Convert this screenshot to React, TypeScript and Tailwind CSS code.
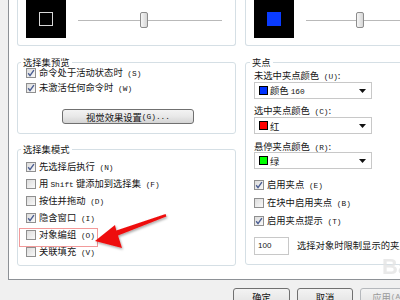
import React from "react";

function M({ children }: { children: React.ReactNode }) {
  return <span className="[font-family:'Liberation_Mono',monospace] text-[7.8px]">{children}</span>;
}

function Check({ checked }: { checked?: boolean }) {
  return (
    <span className="flex h-[10px] w-[10px] shrink-0 items-center justify-center border border-[#8f8f8f] bg-linear-to-br from-[#dcdcdc] to-[#f9f9f9]">
      {checked && (
        <svg width="8" height="8" viewBox="0 0 8 8">
          <path d="M1.2 4.3 L3 6.6 L6.9 1.1" fill="none" stroke="#4a5d92" strokeWidth="1.4" />
        </svg>
      )}
    </span>
  );
}

function Row({ checked, children }: { checked?: boolean; children: React.ReactNode }) {
  return (
    <div className="flex h-[12px] items-center gap-[3px] whitespace-nowrap leading-[12px]">
      <Check checked={checked} />
      <span>{children}</span>
    </div>
  );
}

function Slider({ pre }: { pre: number }) {
  return (
    <div className="ml-[12px] mt-[12px] flex h-[16px] flex-1 items-center">
      <div className={pre === 62 ? "h-[1px] w-[62px] bg-[#b9b9b9]" : "h-[1px] w-[50px] bg-[#b9b9b9]"} />
      <div className="h-[16px] w-[8px] shrink-0 rounded-[2px] border border-[#8c8c8c] bg-linear-to-r from-[#f6f6f6] to-[#d6d6d6]" />
      <div className="h-[1px] flex-1 bg-[#b9b9b9]" />
    </div>
  );
}

function Combo({ swatch, children }: { swatch: string; children: React.ReactNode }) {
  return (
    <div className="flex h-[17px] w-[118px] items-center gap-[2px] border border-[#c8c8c8] bg-white pl-[4px] pr-[5px]">
      <span className={"h-[9px] w-[9px] shrink-0 border border-black " + swatch} />
      <span className="leading-[12px]">{children}</span>
      <svg className="ml-auto" width="7" height="4" viewBox="0 0 7 4">
        <path d="M0 0 H7 L3.5 4 Z" fill="#111" />
      </svg>
    </div>
  );
}

function WinButton({ disabled, className, children }: { disabled?: boolean; className: string; children: React.ReactNode }) {
  return (
    <div
      className={
        "flex justify-center rounded-[3px] border bg-linear-to-b from-[#f3f3f3] via-[#e8e8e8] to-[#d4d4d4] leading-[12px] " +
        (disabled ? "border-[#b5b8bc] text-[#9a9a9a] " : "border-[#707070] text-[#111] ") +
        className
      }
    >
      {children}
    </div>
  );
}

export default function App() {
  return (
    <div className="relative h-[300px] w-[400px] overflow-hidden bg-[#f0f0f0] text-[9.3px] text-[#151515] [font-family:'Noto_Sans_CJK_SC',sans-serif]">
      {/* Tab page */}
      <div className="ml-[8px] h-[280px] overflow-hidden border-b border-l border-[#8d9196] bg-white pl-[8px]">
        <div className="flex gap-[9px]">
          {/* Left column */}
          <div className="w-[219px] shrink-0">
            <div className="flex h-[46px] items-start rounded-b-[3px] border-x border-b border-[#d5dfe5] pl-[8px] pr-[13px]">
              <div className="flex h-[38px] w-[40px] shrink-0 items-center justify-center bg-black">
                <div className="h-[14px] w-[14px] border border-[#d8d8d8]" />
              </div>
              <Slider pre={62} />
            </div>

            <fieldset className="mt-[11px] rounded-[3px] border border-[#d5dfe5] px-[8px] pb-[9px]">
              <legend className="-ml-[5px] px-[2px] leading-[10px]">选择集预览</legend>
              <div className="flex flex-col gap-[3px]">
                <Row checked>
                  命令处于活动状态时<M> (S)</M>
                </Row>
                <Row checked>
                  未激活任何命令时<M> (W)</M>
                </Row>
              </div>
              <WinButton className="ml-[36px] mt-[15px] h-[15px] w-[132px] items-center">
                视觉效果设置<M> (G)...</M>
              </WinButton>
            </fieldset>

            <fieldset className="mt-[10px] rounded-[3px] border border-[#d5dfe5] px-[8px] pb-[7px] pt-[7px]">
              <legend className="-ml-[5px] px-[2px] leading-[10px]">选择集模式</legend>
              <div className="flex flex-col gap-[5px]">
                <Row checked>
                  先选择后执行<M> (N)</M>
                </Row>
                <Row>
                  用 <M>Shift</M> 键添加到选择集<M> (F)</M>
                </Row>
                <Row>
                  按住并拖动<M> (D)</M>
                </Row>
                <Row checked>
                  隐含窗口<M> (I)</M>
                </Row>
                <Row>
                  对象编组<M> (O)</M>
                </Row>
                <Row>
                  关联填充<M> (V)</M>
                </Row>
              </div>
            </fieldset>
          </div>

          {/* Right column */}
          <div className="w-[170px] shrink-0">
            <div className="flex h-[46px] items-start rounded-b-[3px] border-x border-b border-[#d5dfe5] pl-[8px]">
              <div className="flex h-[38px] w-[40px] shrink-0 items-center justify-center bg-black">
                <div className="h-[14px] w-[14px] bg-[#0a3cff]" />
              </div>
              <Slider pre={50} />
            </div>

            <fieldset className="mt-[11px] rounded-[3px] border border-[#d5dfe5] px-[8px] pb-[9px] pt-[2px]">
              <legend className="-ml-[4px] px-[2px] leading-[10px]">夹点</legend>
              <div className="h-[12px] whitespace-nowrap leading-[12px]">
                未选中夹点颜色<M> (U)</M>:
              </div>
              <div className="mt-[1px]">
                <Combo swatch="bg-[#0033ff]">
                  颜色 <M>160</M>
                </Combo>
              </div>
              <div className="mt-[5px] h-[12px] whitespace-nowrap leading-[12px]">
                选中夹点颜色<M> (C)</M>:
              </div>
              <div className="mt-[1px]">
                <Combo swatch="bg-[#ff0000]">红</Combo>
              </div>
              <div className="mt-[6px] h-[12px] whitespace-nowrap leading-[12px]">
                悬停夹点颜色<M> (R)</M>:
              </div>
              <Combo swatch="bg-[#00ff00]">绿</Combo>
              <div className="mt-[10px] flex flex-col gap-[6px]">
                <Row checked>
                  启用夹点<M> (E)</M>
                </Row>
                <Row>
                  在块中启用夹点<M> (B)</M>
                </Row>
                <Row checked>
                  启用夹点提示<M> (T)</M>
                </Row>
              </div>
              <div className="mt-[10px] flex items-center whitespace-nowrap">
                <div className="flex h-[18px] w-[35px] shrink-0 items-center border border-[#c8c8c8] bg-white pl-[3px] text-[8px] [font-family:'Liberation_Sans',sans-serif]">
                  100
                </div>
                <span className="ml-[8px]">选择对象时限制显示的夹点数</span>
              </div>
            </fieldset>
          </div>
        </div>
      </div>

      {/* Dialog buttons */}
      <div className="mt-[8px] flex gap-[7px] pl-[233px]">
        <WinButton className="h-[23px] w-[57px] shrink-0 pt-[2px]">确定</WinButton>
        <WinButton className="h-[23px] w-[56px] shrink-0 pt-[2px]">取消</WinButton>
        <WinButton disabled className="h-[23px] w-[57px] shrink-0 pt-[2px]">
          应用<M> (A)</M>
        </WinButton>
      </div>

      {/* Watermark */}
      <span className="pointer-events-none absolute left-[382px] top-[250px] text-[22px] font-bold text-[#e4e4e4] opacity-80 [font-family:'Liberation_Sans',sans-serif]">
        Ba
      </span>

      {/* Annotation: highlight box */}
      <div className="pointer-events-none absolute left-[19px] top-[228px] h-[19px] w-[79px] border border-[#f29a9a]" />

      {/* Annotation: arrow */}
      <svg className="pointer-events-none absolute left-0 top-0" width="400" height="300" viewBox="0 0 400 300">
        <defs>
          <filter id="sh" x="-20%" y="-20%" width="140%" height="140%">
            <feDropShadow dx="1" dy="1.5" stdDeviation="1.2" floodColor="#000" floodOpacity="0.35" />
          </filter>
        </defs>
        <path
          d="M95 241 L115 225 L116.3 230.6 L165.6 214 L166.4 216.4 L118 235.6 L122 248 Z"
          fill="#ee1111"
          filter="url(#sh)"
        />
      </svg>
    </div>
  );
}
